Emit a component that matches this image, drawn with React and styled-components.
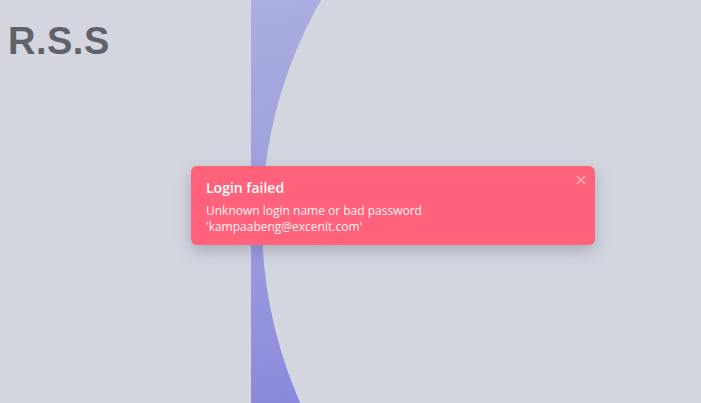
import React from 'react';
import styled, { createGlobalStyle } from 'styled-components';

const Global = createGlobalStyle`
  html, body {
    margin: 0;
    padding: 0;
    background: #d3d6df;
  }
  #root {
    height: 403px;
  }
`;

const Page = styled.div`
  display: grid;
  grid-template-columns: 251px 1fr;
  height: 403px;
  position: relative;
  overflow: hidden;
  background: #d3d6df;
`;

const Side = styled.div`
  padding: 20px 8px;
`;

const Brand = styled.h1`
  margin: 0;
  font-family: "Liberation Sans", Arial, sans-serif;
  font-weight: bold;
  font-size: 38px;
  letter-spacing: 0.5px;
  color: #5f6269;
`;

const Stage = styled.div`
  position: relative;
  overflow: hidden;
  background: linear-gradient(170deg, #abaedf 0%, #9a9bde 50%, #8382db 100%);

  &::after {
    content: "";
    position: absolute;
    left: 11px;
    top: -225px;
    width: 894px;
    height: 894px;
    border-radius: 50%;
    background: #d3d6df;
  }
`;

const Toast = styled.div`
  position: absolute;
  left: 191px;
  top: 166px;
  width: 404px;
  height: 79px;
  box-sizing: border-box;
  padding: 12px 15px;
  border-radius: 6px;
  background: #ff627a;
  box-shadow: 0 6px 16px rgba(90, 95, 120, 0.35);
  color: #fff;
  font-family: "Open Sans", sans-serif;
  z-index: 2;
`;

const Title = styled.div`
  font-size: 14px;
  font-weight: 600;
  line-height: 18px;
  margin-top: 1px;
`;

const Message = styled.div`
  margin-top: 6px;
  font-size: 12px;
  line-height: 16px;
  color: #fff3f5;
`;

const Close = styled.button`
  position: absolute;
  top: 9px;
  right: 9px;
  padding: 0;
  border: none;
  background: none;
  color: #ffb3c0;
  cursor: pointer;
  line-height: 0;
`;

export default function App() {
  return (
    <>
      <Global />
      <Page>
        <Side>
          <Brand>R.S.S</Brand>
        </Side>
        <Stage />
        <Toast>
          <Close>
            <svg width="10" height="10" viewBox="0 0 10 10">
              <path d="M1 1L9 9M9 1L1 9" stroke="currentColor" strokeWidth="1.5" />
            </svg>
          </Close>
          <Title>Login failed</Title>
          <Message>
            Unknown login name or bad password
            <br />
            'kampaabeng@excenit.com'
          </Message>
        </Toast>
      </Page>
    </>
  );
}
